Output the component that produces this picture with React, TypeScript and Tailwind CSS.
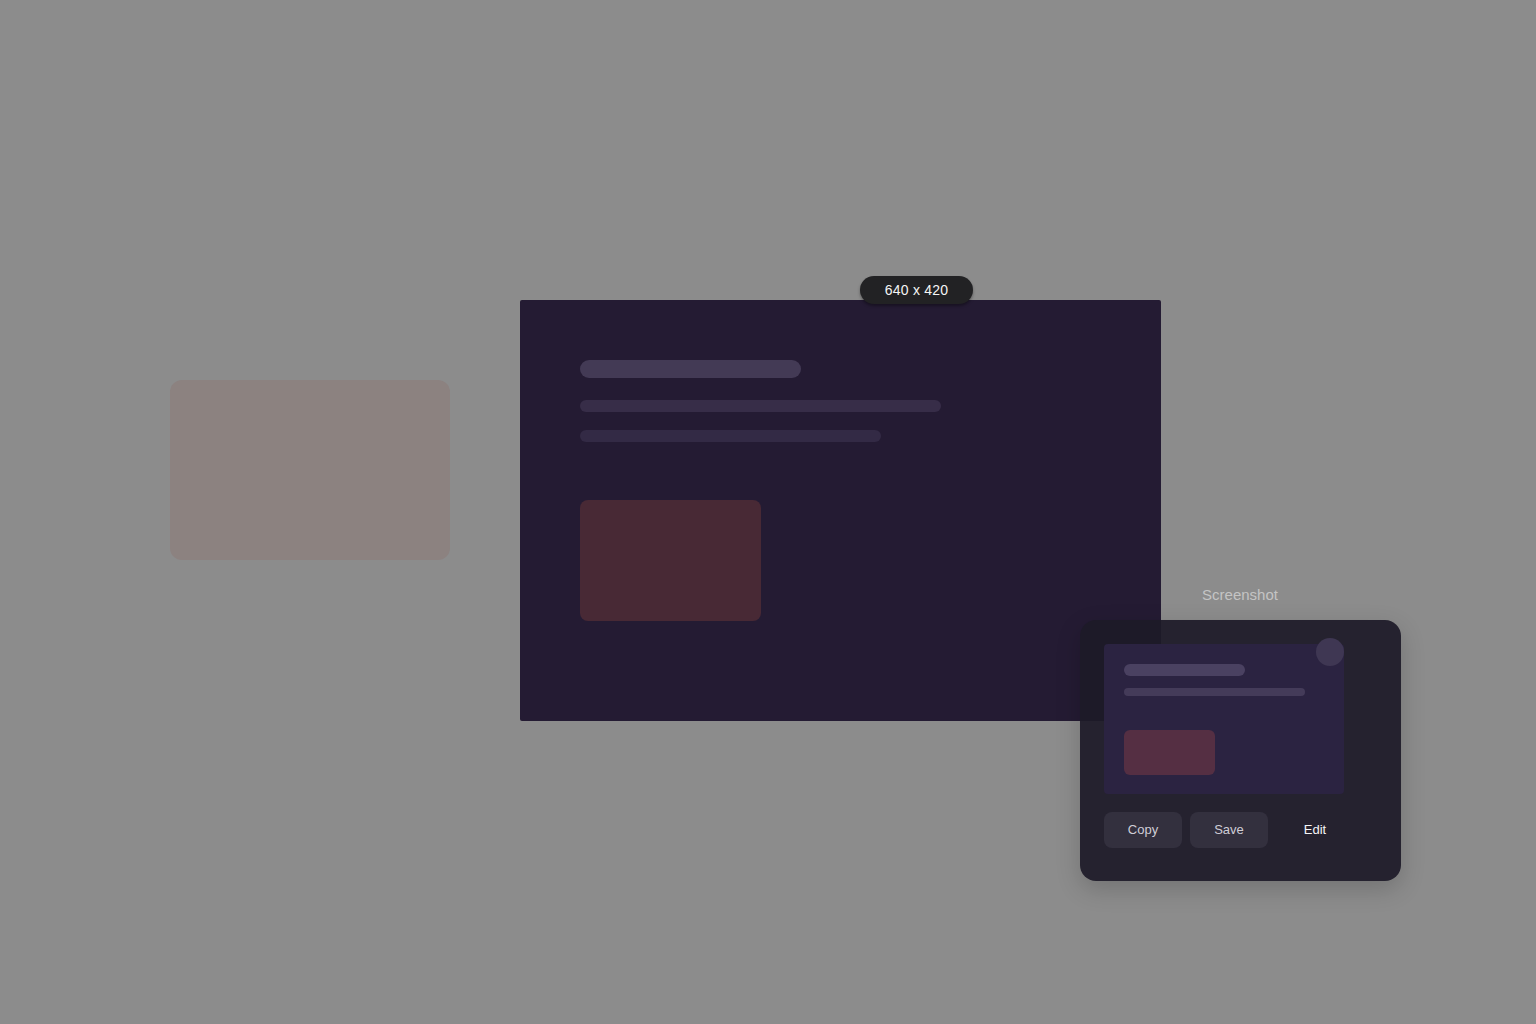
import React from "react";

export default function App() {
  return (
    <div
      className="relative w-[1536px] h-[1024px] overflow-hidden bg-[#8c8c8c]"
      style={{ fontFamily: '"Liberation Sans", Arial, sans-serif' }}
    >
      {/* left dim card */}
      <div className="absolute left-[170px] top-[380px] w-[280px] h-[180px] rounded-[12px] bg-[#8c8280]" />

      {/* main selection window */}
      <div className="absolute left-[520px] top-[300px] w-[641px] h-[421px] rounded-[2px] bg-[#241b33]">
        <div className="flex flex-col pl-[60px] pt-[60px]">
          <div className="w-[221px] h-[18px] rounded-full bg-[#433a55]" />
          <div className="mt-[22px] w-[361px] h-[12px] rounded-full bg-[#372d48]" />
          <div className="mt-[18px] w-[301px] h-[12px] rounded-full bg-[#332a45]" />
          <div className="mt-[58px] w-[181px] h-[121px] rounded-[8px] bg-[#482935]" />
        </div>
      </div>

      {/* size pill */}
      <div className="absolute left-[860px] top-[276px] w-[113px] h-[28px] rounded-full bg-[#222224] flex items-center justify-center text-[14px] tracking-[0.2px] text-[#f5f5f5] shadow-[0_2px_3px_rgba(0,0,0,0.35)]">
        640 x 420
      </div>

      {/* label */}
      <div className="absolute left-[1080px] top-[584px] w-[320px] text-center text-[15px] text-[#c4c4c4]">
        Screenshot
      </div>

      {/* screenshot panel */}
      <div className="absolute left-[1080px] top-[620px] w-[321px] h-[261px] rounded-[16px] bg-[rgba(29,26,40,0.93)] shadow-[0_8px_24px_rgba(0,0,0,0.18)] p-[24px] flex flex-col">
        <div className="relative w-[240px] h-[150px] rounded-[4px] bg-[#2b2341] pl-[20px] pt-[20px] flex flex-col">
          <div className="w-[121px] h-[12px] rounded-full bg-[#4a4161]" />
          <div className="mt-[12px] w-[181px] h-[8px] rounded-full bg-[#443b59]" />
          <div className="mt-[34px] w-[91px] h-[45px] rounded-[6px] bg-[#552f43]" />
          <div className="absolute right-[0px] top-[-6px] w-[28px] h-[28px] rounded-full bg-[#3f3753]" />
        </div>
        <div className="mt-[18px] flex items-center gap-[8px] text-[13px]">
          <div className="w-[78px] h-[36px] rounded-[8px] bg-[#33303e] flex items-center justify-center text-[#cfcdd6]">
            Copy
          </div>
          <div className="w-[78px] h-[36px] rounded-[8px] bg-[#33303e] flex items-center justify-center text-[#cfcdd6]">
            Save
          </div>
          <div className="w-[78px] h-[36px] flex items-center justify-center text-[#f4f4f6]">
            Edit
          </div>
        </div>
      </div>
    </div>
  );
}
